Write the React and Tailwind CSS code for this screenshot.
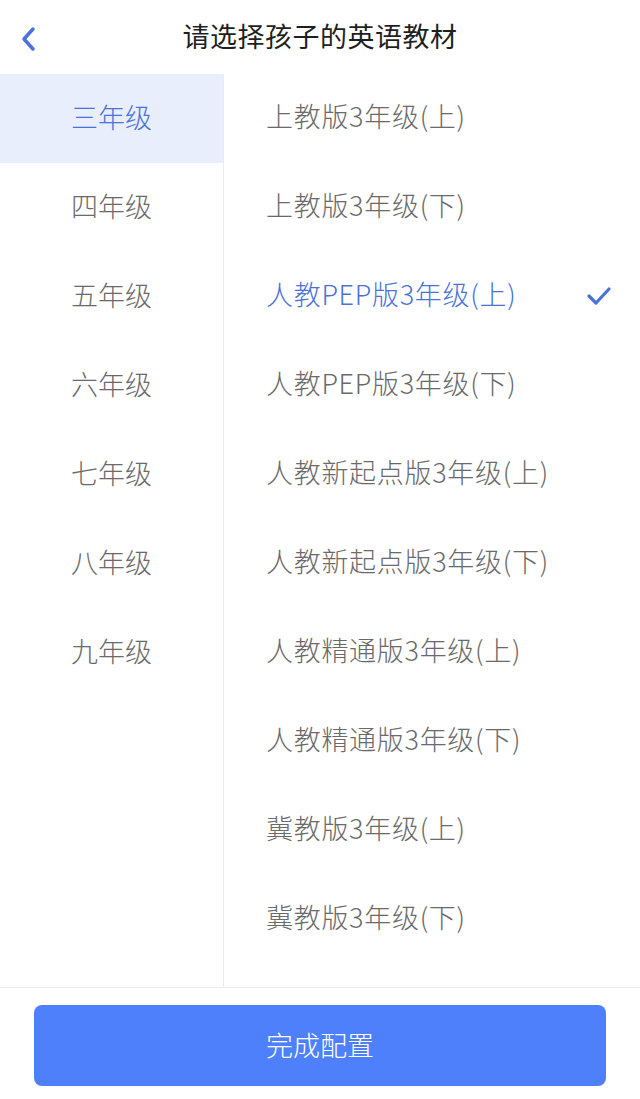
import React, { useState } from 'react';

const grades = ['三年级', '四年级', '五年级', '六年级', '七年级', '八年级', '九年级'];

const books = [
  '上教版3年级(上)',
  '上教版3年级(下)',
  '人教PEP版3年级(上)',
  '人教PEP版3年级(下)',
  '人教新起点版3年级(上)',
  '人教新起点版3年级(下)',
  '人教精通版3年级(上)',
  '人教精通版3年级(下)',
  '冀教版3年级(上)',
  '冀教版3年级(下)',
];

const font = { fontFamily: '"Noto Sans CJK SC", "Noto Sans", sans-serif' };

export default function App() {
  const [grade, setGrade] = useState(0);
  const [book, setBook] = useState(2);

  return (
    <div className="w-[640px] h-[1099px] bg-white flex flex-col" style={font}>
      {/* Header */}
      <div className="h-[74px] relative flex items-center justify-center shrink-0 pb-[4px]">
        <button className="absolute left-[14px] top-[20px] p-1 text-[#4a72d8]">
          <svg width="22" height="30" viewBox="0 0 22 30" fill="none">
            <path d="M15 5 L6 15 L15 25" stroke="currentColor" strokeWidth="3.5" strokeLinecap="round" strokeLinejoin="round" />
          </svg>
        </button>
        <span className="text-[27px] text-[#1f1f1f] tracking-[0.5px] leading-none">请选择孩子的英语教材</span>
      </div>

      {/* Body */}
      <div className="flex flex-1 min-h-0">
        <div className="w-[224px] shrink-0 border-r border-[#ececec]">
          {grades.map((g, i) => (
            <div
              key={g}
              onClick={() => setGrade(i)}
              className={
                'h-[89px] flex items-center justify-center pb-[2px] text-[27px] font-light cursor-pointer ' +
                (i === grade ? 'bg-[#e8eefc] text-[#4a72d8]' : 'text-[#6a6a6a]')
              }
            >
              {g}
            </div>
          ))}
        </div>
        <div className="flex-1">
          {books.map((b, i) => (
            <div
              key={b}
              onClick={() => setBook(i)}
              className={
                'h-[89px] flex items-center justify-between pl-[42px] pr-[28px] pb-[5px] text-[27px] tracking-[0.7px] font-light cursor-pointer ' +
                (i === book ? 'text-[#4a72d8]' : 'text-[#6a6a6a]')
              }
            >
              <span>{b}</span>
              {i === book && (
                <svg width="26" height="22" viewBox="0 0 26 22" fill="none" className="text-[#4a72d8] mt-[4px]">
                  <path d="M3 11 L10 18 L23 4" stroke="currentColor" strokeWidth="3.2" strokeLinecap="round" strokeLinejoin="round" />
                </svg>
              )}
            </div>
          ))}
        </div>
      </div>

      {/* Footer */}
      <div className="h-[112px] shrink-0 border-t border-[#ececec] pt-[17px] px-[34px]">
        <button className="w-full h-[81px] rounded-[8px] bg-[#4f80fc] text-white text-[27px] font-light">
          完成配置
        </button>
      </div>
    </div>
  );
}
